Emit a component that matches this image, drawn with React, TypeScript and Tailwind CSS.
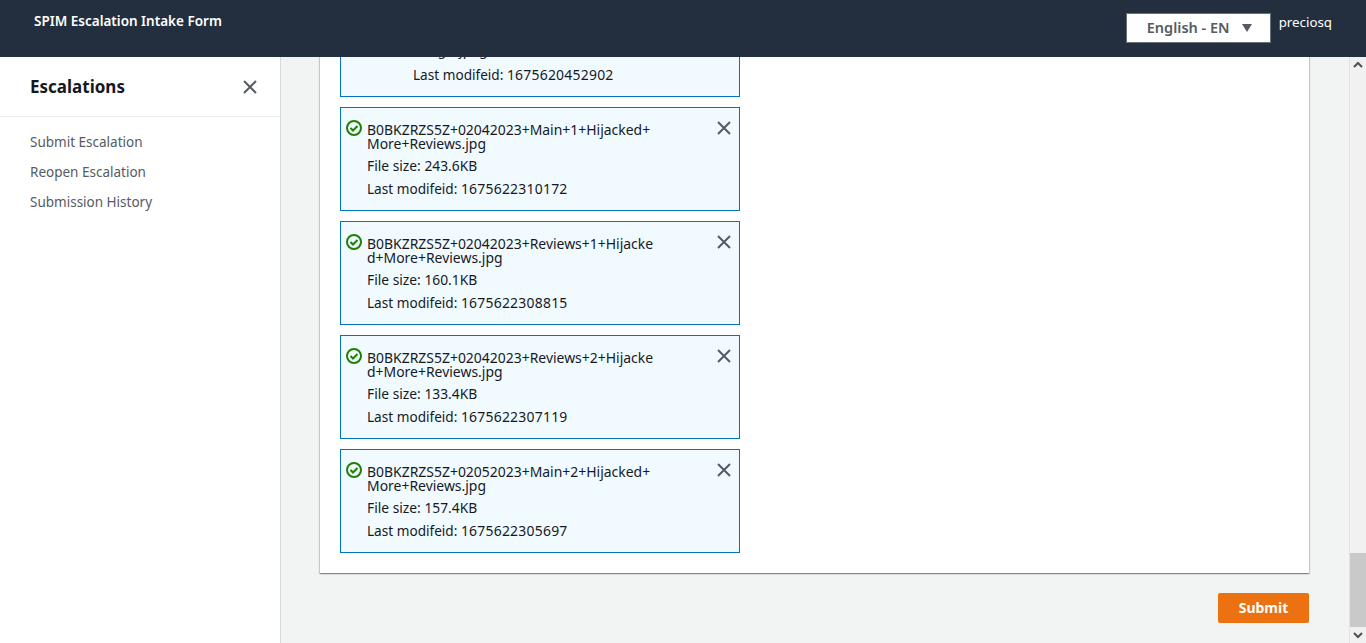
import React from 'react';

const files = [
  { name: 'B0BKZRZS5Z+02042023+Main+1+Hijacked+\nMore+Reviews.jpg', size: '243.6KB', modified: '1675622310172' },
  { name: 'B0BKZRZS5Z+02042023+Reviews+1+Hijacke\nd+More+Reviews.jpg', size: '160.1KB', modified: '1675622308815' },
  { name: 'B0BKZRZS5Z+02042023+Reviews+2+Hijacke\nd+More+Reviews.jpg', size: '133.4KB', modified: '1675622307119' },
  { name: 'B0BKZRZS5Z+02052023+Main+2+Hijacked+\nMore+Reviews.jpg', size: '157.4KB', modified: '1675622305697' },
];

const CloseIcon = ({ size = 16 }: { size?: number }) => (
  <svg width={size} height={size} viewBox="0 0 16 16" fill="none" stroke="#545b64" strokeWidth={2}>
    <path d="M2 2l12 12M14 2L2 14" />
  </svg>
);

const CheckIcon = () => (
  <svg width="16" height="16" viewBox="0 0 16 16" fill="none" stroke="#1d8102" strokeWidth={2}>
    <circle cx="8" cy="8" r="7" />
    <path d="M4.5 8l2.5 2.5 4.5-4.5" />
  </svg>
);

const Modified = ({ value }: { value: string }) => (
  <div className="mt-[3px] leading-[20px]">
    <span className="text-[13.6px]">Last modifeid: </span>
    <span className="tracking-[0.23px]">{value}</span>
  </div>
);

const App: React.FC = () => {
  return (
    <div className="h-[643px] flex flex-col overflow-hidden bg-[#f2f3f3] text-[13.95px] text-[#16191f] font-['Noto_Sans',sans-serif]">
      <header className="h-[57px] shrink-0 bg-[#232f3e] flex justify-between pl-[34px] pr-[34px]">
        <div className="pt-[12px] text-[13.5px] leading-[18px] font-semibold text-white">SPIM Escalation Intake Form</div>
        <div className="flex items-start pt-[13px]">
          <div className="w-[145px] h-[30px] bg-white border border-[#687078] flex items-center justify-center gap-[12px] pl-[2px] pb-[1px] text-[14.5px] font-semibold text-[#545b64]">
            <span>English - EN</span>
            <span className="w-0 h-0 border-l-[5px] border-r-[5px] border-t-[8px] border-l-transparent border-r-transparent border-t-[#545b64]" />
          </div>
          <div className="ml-[8px] text-[13.3px] leading-[20px] -mt-[1px] text-white">preciosq</div>
        </div>
      </header>

      <div className="flex-1 flex min-h-0">
        <aside className="w-[281px] shrink-0 bg-white border-r border-[#d5dbdb]">
          <div className="h-[60px] border-b border-[#eaeded] flex items-center justify-between pl-[30px] pr-[22px]">
            <h2 className="text-[17px] leading-[24px] mt-[1px] font-bold">Escalations</h2>
            <CloseIcon />
          </div>
          <nav className="pt-[15px] flex flex-col gap-[10px] pl-[30px] text-[13.5px] leading-[20px] text-[#545b64]">
            <a>Submit Escalation</a>
            <a>Reopen Escalation</a>
            <a>Submission History</a>
          </nav>
        </aside>

        <main className="flex-1 min-w-0 flex flex-col justify-end overflow-hidden pl-[39px] pr-[40px] pb-[20px]">
          <div className="bg-white shadow-[0_1px_1px_0_rgba(0,28,36,0.3),1px_1px_1px_0_rgba(0,28,36,0.15),-1px_1px_1px_0_rgba(0,28,36,0.15)] pl-[20px] pb-[20px]">
            <div className="w-[400px] flex flex-col gap-[10px]">
              <div className="h-[67px] border border-[#0073bb] bg-[#f1faff] pl-[72px] pt-[9px] leading-[20px]">
                <div className="mb-[5px]">image/jpeg</div>
                <Modified value="1675620452902" />
              </div>
              {files.map((file) => (
                <div key={file.modified} className="relative h-[104px] border border-[#0073bb] bg-[#f1faff] pl-[26px] pt-[15px]">
                  <span className="absolute left-[5px] top-[12px]"><CheckIcon /></span>
                  <span className="absolute right-[7px] top-[12px]"><CloseIcon /></span>
                  <div className="leading-[14px] whitespace-pre-line">{file.name}</div>
                  <div className="mt-[5px] leading-[20px] text-[13.8px]">File size: {file.size}</div>
                  <Modified value={file.modified} />
                </div>
              ))}
            </div>
          </div>
          <div className="mt-[20px] flex justify-end">
            <button className="w-[91px] h-[30px] pb-[1px] rounded-[2px] bg-[#ec7211] text-white text-[14px] font-bold">Submit</button>
          </div>
        </main>

        <div className="w-[17px] shrink-0 bg-[#f1f1f1] border-l border-[#e3e3e3] flex flex-col justify-between relative">
          <svg className="mt-[4px] ml-[3px]" width="10" height="7" viewBox="0 0 10 7" fill="none" stroke="#505050" strokeWidth={2}>
            <path d="M1 6l4-4 4 4" />
          </svg>
          <div className="absolute left-0 right-0 bottom-[16px] h-[74px] bg-[#c9c9c9]" />
          <svg className="mb-[4px] ml-[3px]" width="10" height="7" viewBox="0 0 10 7" fill="none" stroke="#505050" strokeWidth={2}>
            <path d="M1 1l4 4 4-4" />
          </svg>
        </div>
      </div>
    </div>
  );
};

export default App;
